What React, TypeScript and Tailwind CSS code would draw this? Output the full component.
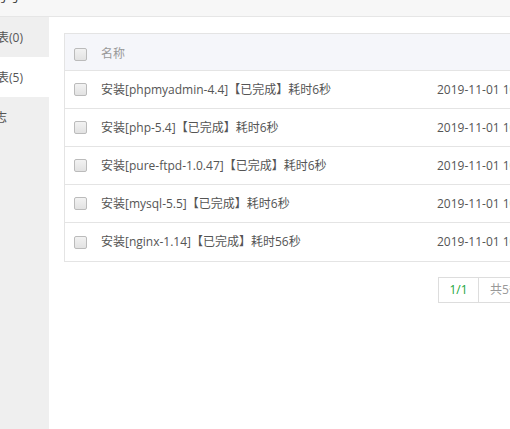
const rows = [
  { name: "安装[phpmyadmin-4.4]【已完成】耗时6秒", time: "2019-11-01 10:32:18" },
  { name: "安装[php-5.4]【已完成】耗时6秒", time: "2019-11-01 10:32:12" },
  { name: "安装[pure-ftpd-1.0.47]【已完成】耗时6秒", time: "2019-11-01 10:32:06" },
  { name: "安装[mysql-5.5]【已完成】耗时6秒", time: "2019-11-01 10:32:00" },
  { name: "安装[nginx-1.14]【已完成】耗时56秒", time: "2019-11-01 10:31:04" },
];

function Check() {
  return (
    <span className="block w-[13px] h-[13px] rounded-[2px] border border-[#bbb] bg-gradient-to-b from-[#f2f2f2] to-[#e2e2e2]"></span>
  );
}

export default function App() {
  return (
    <div
      className="w-[510px] h-[429px] overflow-hidden bg-white flex flex-col text-[12px] text-[#555]"
      style={{ fontFamily: '"Open Sans", "Noto Sans CJK SC", sans-serif' }}
    >
      <div className="h-[17px] shrink-0 bg-[#f7f7f7] border-b border-[#e6e6e6] overflow-hidden">
        <div className="-mt-[12px] -ml-[19px] leading-[16px] text-[13px] text-[#333] whitespace-nowrap">任务号</div>
      </div>
      <div className="flex flex-1 min-h-0">
        <div className="w-[49px] shrink-0 bg-[#efefef] overflow-hidden">
          <div className="h-[40px] pt-[2px] flex items-center whitespace-nowrap -ml-[39px] text-[#555]">消息列表(0)</div>
          <div className="h-[40px] pt-[2px] flex items-center whitespace-nowrap bg-white text-[#555]">
            <span className="-ml-[39px]">任务列表(5)</span>
          </div>
          <div className="h-[40px] pt-[2px] flex items-center whitespace-nowrap -ml-[41px] text-[#555]">执行日志</div>
        </div>
        <div className="flex-1 min-w-0 overflow-hidden pt-[16px] pl-[15px]">
          <div className="w-[640px] border border-[#e4e4e4]">
            <div className="h-[37px] pt-[4px] flex items-center bg-[#f5f6fa] border-b border-[#e4e4e4]">
              <div className="w-[36px] pl-[9px]"><Check /></div>
              <div className="w-[336px] text-[#999]">名称</div>
              <div></div>
            </div>
            {rows.map((r, i) => (
              <div key={i} className={`h-[38px] flex items-center ${i < rows.length - 1 ? "border-b border-[#e4e4e4]" : ""}`}>
                <div className="w-[36px] pl-[9px]"><Check /></div>
                <div className="w-[336px] whitespace-nowrap text-[#555]">{r.name}</div>
                <div className="whitespace-nowrap text-[#555]">{r.time}</div>
              </div>
            ))}
          </div>
          <div className="mt-[15px] ml-[374px] flex h-[26px] w-[200px] border border-[#ddd] whitespace-nowrap">
            <div className="w-[40px] flex items-center justify-center text-[#20a53a] border-r border-[#ddd]">1/1</div>
            <div className="px-[11px] flex items-center text-[#999]">共5条数据</div>
          </div>
        </div>
      </div>
    </div>
  );
}
